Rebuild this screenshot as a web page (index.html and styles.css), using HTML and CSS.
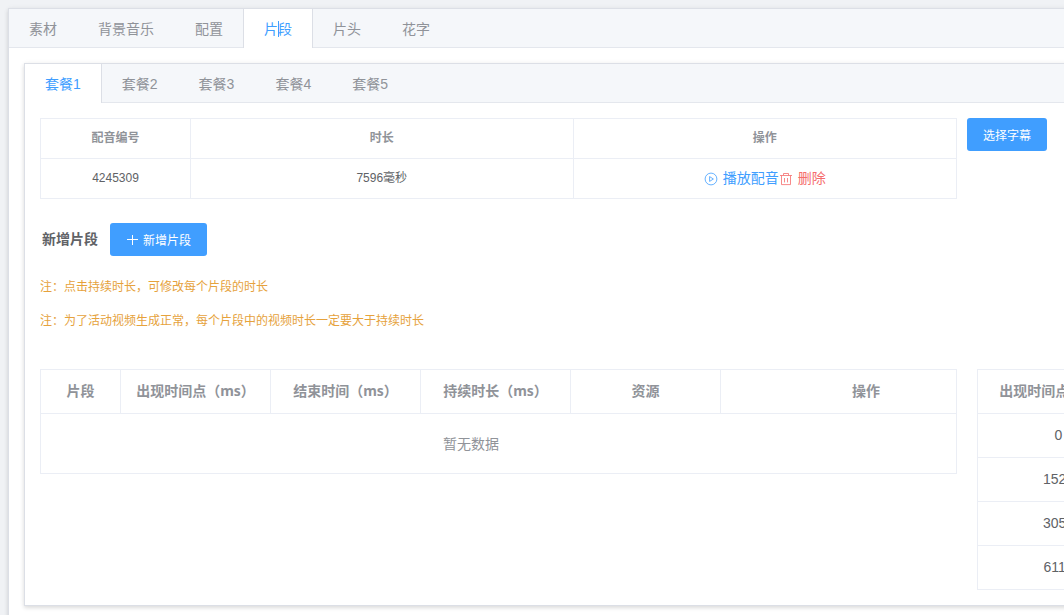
FILE: index.html
```html
<!DOCTYPE html>
<html lang="zh-CN">
<head>
<meta charset="utf-8">
<title>片段</title>
<link rel="stylesheet" href="styles.css">
</head>
<body>
<main class="tabs page">
  <nav class="tabs-nav">
    <button class="tab">素材</button>
    <button class="tab">背景音乐</button>
    <button class="tab">配置</button>
    <button class="tab active with-caret">片段</button>
    <button class="tab">片头</button>
    <button class="tab">花字</button>
  </nav>
  <div class="tabs-content">
    <section class="tabs">
      <nav class="tabs-nav">
        <button class="tab active">套餐1</button>
        <button class="tab">套餐2</button>
        <button class="tab">套餐3</button>
        <button class="tab">套餐4</button>
        <button class="tab">套餐5</button>
      </nav>
      <div class="tabs-content">
        <div class="columns columns-voice">
          <div class="table-wrap">
            <table class="table table-small">
              <colgroup><col class="col-voice-id"><col><col></colgroup>
              <thead><tr><th>配音编号</th><th>时长</th><th>操作</th></tr></thead>
              <tbody>
                <tr>
                  <td>4245309</td>
                  <td>7596毫秒</td>
                  <td>
                    <div class="actions">
                      <button class="link primary">
                        <svg class="icon" viewBox="0 0 14 14" aria-hidden="true"><circle cx="7" cy="7" r="5.9"/><path d="M5.6 4.6v4.8L9.4 7z"/></svg>
                        <span>播放配音</span>
                      </button>
                      <button class="link danger">
                        <svg class="icon" viewBox="0 0 14 14" aria-hidden="true"><path d="M1 3.5h12M4.5 3.2V1.5h5v1.7M2.5 3.6v9h9v-9M5.5 6v4.4M8.5 6v4.4"/></svg>
                        <span>删除</span>
                      </button>
                    </div>
                  </td>
                </tr>
              </tbody>
            </table>
          </div>
          <button class="button">选择字幕</button>
        </div>

        <div class="section-head">
          <h2 class="section-title">新增片段</h2>
          <button class="button">
            <svg class="icon-plus" viewBox="0 0 12 12" aria-hidden="true"><path d="M6.5 1v10M1 5.5h11"/></svg>
            <span>新增片段</span>
          </button>
        </div>

        <div class="notes">
          <p class="note">注：点击持续时长，可修改每个片段的时长</p>
          <p class="note">注：为了活动视频生成正常，每个片段中的视频时长一定要大于持续时长</p>
        </div>

        <div class="columns columns-clips">
          <div class="table-wrap">
            <table class="table table-clips">
              <colgroup><col class="col-index"><col class="col-time"><col class="col-time"><col class="col-time"><col class="col-time"><col></colgroup>
              <thead><tr><th>片段</th><th>出现时间点（ms）</th><th>结束时间（ms）</th><th>持续时长（ms）</th><th>资源</th><th>操作</th></tr></thead>
              <tbody><tr><td class="empty" colspan="6">暂无数据</td></tr></tbody>
            </table>
          </div>
          <div class="table-wrap">
            <table class="table">
              <colgroup><col class="col-start"><col></colgroup>
              <thead><tr><th>出现时间点（ms）</th><th></th></tr></thead>
              <tbody>
                <tr><td>0</td><td></td></tr>
                <tr><td>1520</td><td></td></tr>
                <tr><td>3050</td><td></td></tr>
                <tr><td>6110</td><td></td></tr>
              </tbody>
            </table>
          </div>
        </div>
      </div>
    </section>
  </div>
</main>
</body>
</html>
```

FILE: styles.css
```css
* {
  box-sizing: border-box;
}

body {
  margin: 0;
  padding: 8px;
  height: 100vh;
  overflow: hidden;
  background: #f0f2f5;
  color: #606266;
  font-family: "Liberation Sans", "Noto Sans CJK SC", sans-serif;
  font-size: 14px;
}

button {
  margin: 0;
  border: 0;
  background: none;
  font-family: inherit;
  cursor: pointer;
}

.page {
  min-width: 1240px;
}

/* Tabs */
.tabs {
  background: #fff;
  border: 1px solid #dcdfe6;
  box-shadow: 0 2px 4px rgba(0, 0, 0, 0.12), 0 0 6px rgba(0, 0, 0, 0.04);
}

.tabs-nav {
  display: flex;
  height: 39px;
  background: #f5f7fa;
  border-bottom: 1px solid #e4e7ed;
}

.tab {
  height: 39px;
  margin-left: -1px;
  padding: 2px 20px 0;
  border: 1px solid transparent;
  border-top: 0;
  border-bottom: 0;
  color: #909399;
  font-size: 14px;
  line-height: 37px;
}

.tab.active {
  background: #fff;
  border-color: #dcdfe6;
  color: #409eff;
}

.with-caret {
  position: relative;
}

.with-caret::after {
  content: "";
  position: absolute;
  top: 12px;
  left: 50%;
  width: 1px;
  height: 16px;
  background: #409eff;
}

.tabs-content {
  padding: 15px;
}

/* Columns */
.columns {
  display: grid;
  grid-template-columns: minmax(917px, 3fr) minmax(220px, 1fr);
  align-items: start;
}

.columns-voice {
  column-gap: 10px;
  justify-items: start;
}

.columns-clips {
  column-gap: 20px;
}

/* Tables */
.table-wrap {
  width: 100%;
  overflow: hidden;
  border: 1px solid #ebeef5;
  border-bottom: 0;
}

.table {
  width: 100%;
  table-layout: fixed;
  border-collapse: separate;
  border-spacing: 0;
}

.table th,
.table td {
  height: 44px;
  padding: 0;
  border-right: 1px solid #ebeef5;
  border-bottom: 1px solid #ebeef5;
  text-align: center;
  line-height: 23px;
}

.table th:last-child,
.table td:last-child {
  border-right: 0;
}

.table th {
  padding-bottom: 2px;
  color: #909399;
  font-family: "Noto Sans", "Noto Sans CJK SC", sans-serif;
  font-weight: 700;
}

.table-small {
  font-size: 12px;
}

.table-small th,
.table-small td {
  height: 40px;
}

.table-clips {
  width: 970px;
}

.table .empty {
  height: 60px;
  padding-top: 2px;
  padding-right: 110px;
  color: #909399;
}

.col-voice-id,
.col-time {
  width: 150px;
}

.col-index {
  width: 80px;
}

.col-start {
  width: 162px;
}

/* Buttons */
.actions {
  display: flex;
  justify-content: center;
}

.link {
  display: flex;
  align-items: center;
  gap: 5px;
  padding: 0;
  font-size: 14px;
  line-height: 23px;
}

.primary {
  color: #409eff;
}

.danger {
  color: #f56c6c;
}

.icon,
.icon-plus {
  width: 14px;
  height: 14px;
  fill: none;
  stroke: currentColor;
  stroke-width: 0.8;
}

.icon-plus {
  width: 12px;
  height: 12px;
  stroke-width: 1;
}

.button {
  display: flex;
  align-items: center;
  gap: 5px;
  height: 33px;
  padding: 0 16px;
  border-radius: 3px;
  background: #409eff;
  color: #fff;
  font-size: 12px;
}

/* New clip section */
.section-head {
  display: flex;
  align-items: center;
  gap: 12px;
  margin-top: 24px;
  padding-left: 2px;
}

.section-title {
  margin: 0;
  padding-bottom: 4px;
  font-size: 14px;
  font-weight: 700;
}

.notes {
  margin: 14px 0 31px;
}

.note {
  margin: 0;
  color: #e6a23c;
  font-size: 12px;
  line-height: 34px;
}
```
